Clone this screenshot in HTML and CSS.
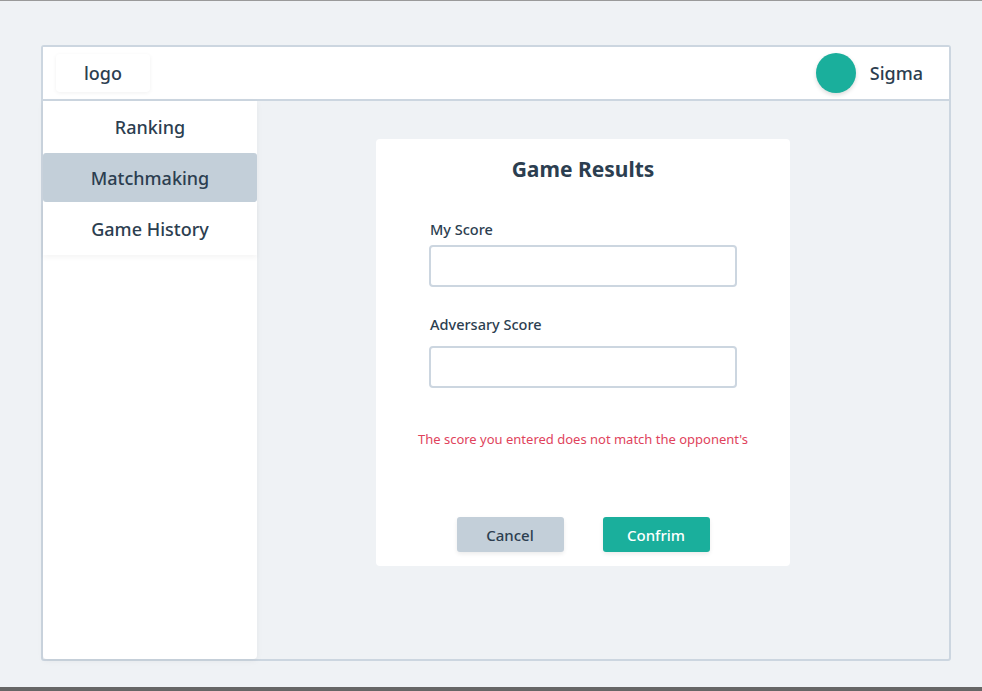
FILE: index.html
```html
<!DOCTYPE html>
<html>
<head>
<meta charset="utf-8">
<link rel="stylesheet" href="styles.css">
</head>
<body>
<div class="page">
  <div class="frame">
    <header class="topbar">
      <div class="logo">logo</div>
      <div class="user">
        <span class="avatar"></span>
        <span class="username">Sigma</span>
      </div>
    </header>
    <div class="body">
      <nav class="sidebar">
        <div class="nav-item">Ranking</div>
        <div class="nav-item active">Matchmaking</div>
        <div class="nav-item last">Game History</div>
      </nav>
      <main class="content">
        <section class="card">
          <h1 class="title">Game Results</h1>
          <label class="label">My Score</label>
          <input class="field" type="text">
          <label class="label second">Adversary Score</label>
          <input class="field" type="text">
          <p class="error">The score you entered does not match the opponent's</p>
          <div class="actions">
            <button class="btn cancel">Cancel</button>
            <button class="btn confirm">Confrim</button>
          </div>
        </section>
      </main>
    </div>
  </div>
</div>
<div class="bottombar"></div>
</body>
</html>
```
FILE: styles.css
```css
* { box-sizing: border-box; }
html, body { margin: 0; padding: 0; }
body {
  width: 982px;
  height: 691px;
  background: #eff2f5;
  font-family: "Noto Sans", "DejaVu Sans", sans-serif;
  color: #2c3e50;
  border-top: 1px solid #9a9a9a;
  display: flex;
  flex-direction: column;
  overflow: hidden;
}
.page {
  flex: 1;
  padding: 44px 0 0 41px;
}
.frame {
  width: 910px;
  height: 616px;
  border: 2px solid #ccd6e0;
  border-radius: 3px;
  display: flex;
  flex-direction: column;
  background: #eff2f5;
}
.topbar {
  height: 54px;
  background: #fff;
  border-bottom: 2px solid #ccd6e0;
  display: flex;
  align-items: center;
  justify-content: space-between;
  padding: 0 26px 0 13px;
}
.logo {
  width: 94px;
  height: 38px;
  border-radius: 4px;
  box-shadow: 0 1px 4px rgba(0,0,0,0.06);
  display: flex;
  align-items: center;
  justify-content: center;
  font-size: 18px;
  font-weight: 500;
}
.user { display: flex; align-items: center; gap: 14px; }
.avatar {
  width: 40px; height: 40px; border-radius: 50%;
  background: #1aaf9c;
  box-shadow: 0 2px 4px rgba(0,0,0,0.15);
}
.username { font-size: 18px; font-weight: 500; }
.body { flex: 1; display: flex; }
.sidebar {
  width: 214px;
  background: #fff;
  border-radius: 0 0 4px 4px;
  box-shadow: 0 2px 6px rgba(0,0,0,0.05);
  display: flex;
  flex-direction: column;
}
.nav-item {
  height: 52px;
  display: flex;
  align-items: center;
  justify-content: center;
  font-size: 18px;
  font-weight: 500;
}
.nav-item.active {
  background: #c3cfd9;
  height: 49px;
  border-radius: 3px;
}
.nav-item.last {
  height: 53px;
  box-shadow: 0 3px 5px rgba(0,0,0,0.04);
}
.content {
  flex: 1;
  display: flex;
  justify-content: flex-start;
  padding: 38px 0 0 119px;
}
.card {
  width: 414px;
  height: 427px;
  background: #fff;
  border-radius: 4px;
  padding: 14px 53px 0 53px;
  display: flex;
  flex-direction: column;
}
.title {
  margin: 0 0 35px 0;
  text-align: center;
  font-size: 21px;
  font-weight: 700;
  line-height: 32px;
}
.label {
  font-size: 14.5px;
  font-weight: 500;
  line-height: 18px;
  margin: 0 0 7px 1px;
}
.label.second { margin-top: 28px; margin-bottom: 13px; }
.field {
  width: 308px;
  height: 42px;
  border: 2px solid #ccd6e0;
  border-radius: 4px;
  background: #fff;
  outline: none;
}
.error {
  margin: 42px -30px 0 -30px;
  text-align: center;
  color: #e0435c;
  font-size: 13px;
  line-height: 18px;
}
.actions {
  margin-top: 69px;
  display: flex;
  justify-content: center;
  gap: 39px;
}
.btn {
  width: 107px;
  height: 35px;
  border: none;
  border-radius: 3px;
  font-family: inherit;
  font-size: 15px;
  font-weight: 500;
  box-shadow: 0 2px 4px rgba(0,0,0,0.08);
}
.cancel { background: #c3cfd9; color: #2c3e50; }
.confirm { background: #1aaf9c; color: #fff; }
.bottombar {
  height: 4px;
  background: #666;
}
```
